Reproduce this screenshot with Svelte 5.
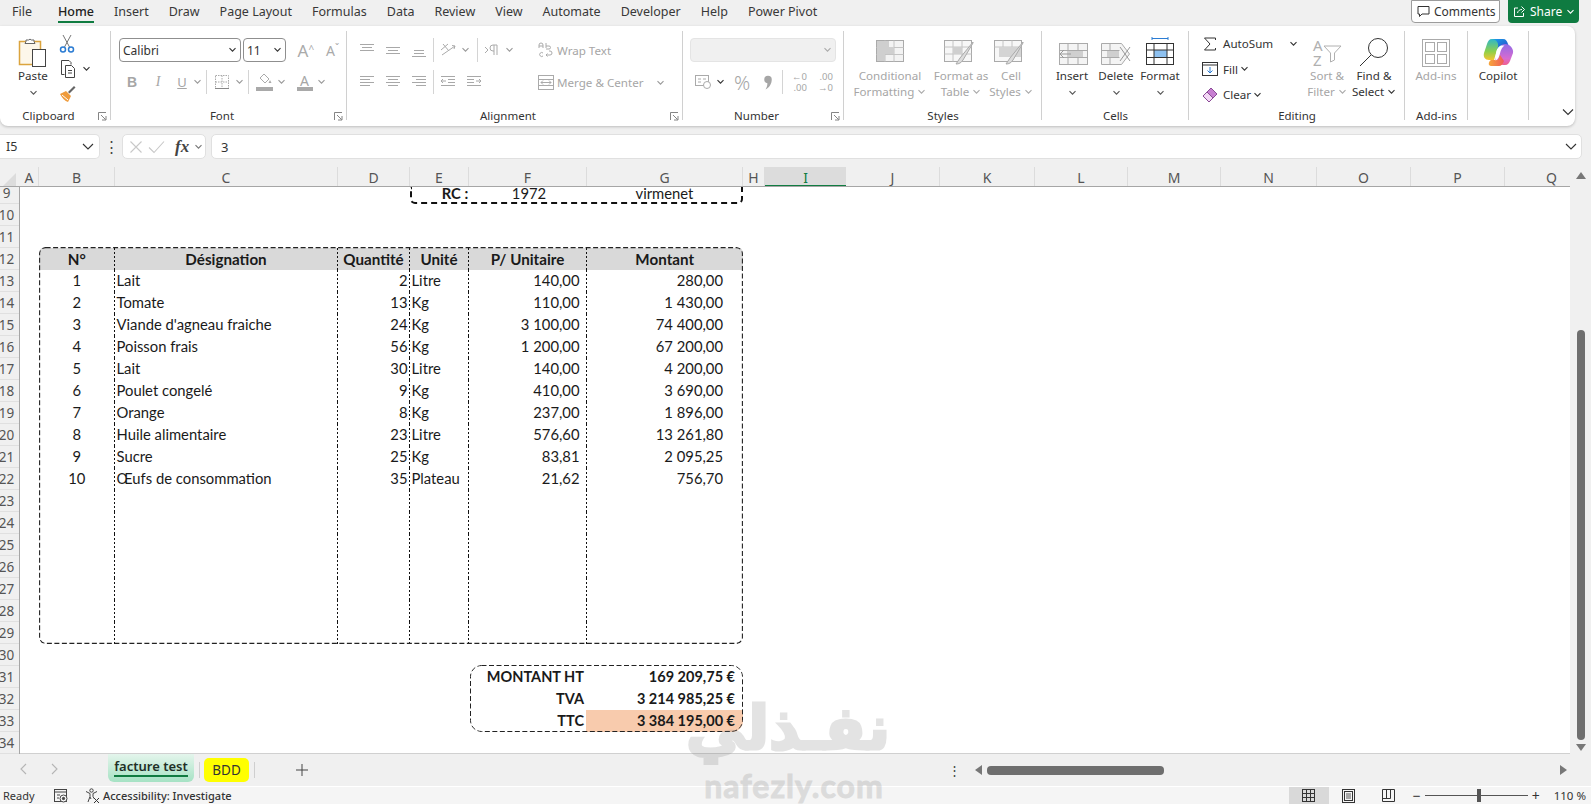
<script>
  const tabs = ['File', 'Home', 'Insert', 'Draw', 'Page Layout', 'Formulas', 'Data', 'Review', 'View', 'Automate', 'Developer', 'Help', 'Power Pivot'];
  const cols = [['A', 19], ['B', 76], ['C', 223], ['D', 72], ['E', 59], ['F', 118], ['G', 156], ['H', 22], ['I', 81], ['J', 94], ['K', 95], ['L', 93], ['M', 93], ['N', 96], ['O', 94], ['P', 94], ['Q', 94]];
  const rowNums = Array.from({ length: 26 }, (_, i) => i + 9);

  const items = [
    ['1', 'Lait', '2', 'Litre', '140,00', '280,00'],
    ['2', 'Tomate', '13', 'Kg', '110,00', '1 430,00'],
    ['3', "Viande d'agneau fraiche", '24', 'Kg', '3 100,00', '74 400,00'],
    ['4', 'Poisson frais', '56', 'Kg', '1 200,00', '67 200,00'],
    ['5', 'Lait', '30', 'Litre', '140,00', '4 200,00'],
    ['6', 'Poulet congelé', '9', 'Kg', '410,00', '3 690,00'],
    ['7', 'Orange', '8', 'Kg', '237,00', '1 896,00'],
    ['8', 'Huile alimentaire', '23', 'Litre', '576,60', '13 261,80'],
    ['9', 'Sucre', '25', 'Kg', '83,81', '2 095,25'],
    ['10', 'Œufs de consommation', '35', 'Plateau', '21,62', '756,70']
  ];
  const emptyRows = Array.from({ length: 7 }, () => ['', '', '', '', '', '']);
  const tableRows = [...items, ...emptyRows];
  const heads = ['N°', 'Désignation', 'Quantité', 'Unité', 'P/ Unitaire', 'Montant'];
  const totals = [
    ['MONTANT HT', '169 209,75 €'],
    ['TVA', '3 214 985,25 €'],
    ['TTC', '3 384 195,00 €']
  ];
</script>

{#snippet chev(color = '#555')}
  <svg class="chev" width="9" height="6" viewBox="0 0 9 6"><path d="M1.5 1.2 4.5 4.2 7.5 1.2" fill="none" stroke={color} stroke-width="1.1"/></svg>
{/snippet}

{#snippet launcher()}
  <svg class="launcher" width="9" height="9" viewBox="0 0 9 9"><path d="M.5 8V.5H8M3 3l4.5 4.5M4 8h4V4" fill="none" stroke="#777" stroke-width=".9"/></svg>
{/snippet}

{#snippet lines(kind)}
  <svg width="16" height="16" viewBox="0 0 16 16" fill="none" stroke="#a8a8a8" stroke-width="1">
    {#if kind === 'top'}<path d="M1 2.5h14M3 5.5h10M1 8.5h14"/>{/if}
    {#if kind === 'mid'}<path d="M1 5.5h14M3 8.5h10M1 11.5h14"/>{/if}
    {#if kind === 'bot'}<path d="M3 8.5h10M3 11.5h10M1 14.5h14"/>{/if}
    {#if kind === 'left'}<path d="M1 2.5h14M1 5.5h10M1 8.5h14M1 11.5h10"/>{/if}
    {#if kind === 'center'}<path d="M1 2.5h14M3 5.5h10M1 8.5h14M3 11.5h10"/>{/if}
    {#if kind === 'right'}<path d="M1 2.5h14M5 5.5h10M1 8.5h14M5 11.5h10"/>{/if}
    {#if kind === 'out'}<path d="M1 2.5h14M8 5.5h7M8 8.5h7M1 11.5h14M6 7H1M3 5 1 7l2 2"/>{/if}
    {#if kind === 'in'}<path d="M1 2.5h14M1 5.5h7M1 8.5h7M1 11.5h14M10 7h5M13 5l2 2-2 2"/>{/if}
  </svg>
{/snippet}

<div class="app">
  <header class="menubar">
    <nav class="tabs">
      {#each tabs as t}
        <span class="tab" class:active={t === 'Home'}>{t}</span>
      {/each}
    </nav>
    <div class="actions">
      <button class="comments">
        <svg width="13" height="13" viewBox="0 0 13 13"><path d="M1 1.5h11v7.5H5L2.5 11.5V9H1z" fill="none" stroke="#333" stroke-width="1"/></svg>
        Comments
      </button>
      <button class="share">
        <svg width="13" height="13" viewBox="0 0 13 13" fill="none" stroke="#fff" stroke-width="1"><path d="M5 3H1.5v8.500h9V8M4.500 8C5 5.500 7 4.500 9 4.500M8.500 1.500 11.500 4.500 8.500 7.500"/></svg>
        Share
        {@render chev('#fff')}
      </button>
    </div>
  </header>

  <section class="ribbon">
    <div class="group launch" style="width:111px">
      <div class="body clip">
        <div class="large paste">
          <svg width="30" height="32" viewBox="0 0 30 32">
            <rect x="1.500" y="5.500" width="21" height="23" fill="#fdf7ea" stroke="#dba43e" stroke-width="1.500"/>
            <path d="M8 5.500V4h2.500a2 2 0 0 1 3 0H16v1.500l1 2H7z" fill="#fff" stroke="#666"/>
            <rect x="14.500" y="13.500" width="13" height="17" fill="#fff" stroke="#444"/>
          </svg>
          <span>Paste</span>
          {@render chev()}
        </div>
        <div class="clipcol">
          <div class="cliprow">
            <svg width="16" height="20" viewBox="0 0 16 20" fill="none"><path d="M4 1l6.500 12M12 1 5.500 13" stroke="#777"/><circle cx="4" cy="15.500" r="2.500" stroke="#2b7cd3" stroke-width="1.500"/><circle cx="12" cy="15.500" r="2.500" stroke="#2b7cd3" stroke-width="1.500"/></svg>
          </div>
          <div class="cliprow">
            <svg width="18" height="18" viewBox="0 0 18 18" fill="none" stroke="#444"><path d="M5.500 14.500h-3V.5h7.500l2 2v2"/><path d="M6.500 5.500h6l3 3v9h-9z" fill="#fff"/><path d="M9 10.500h4M9 13h4"/></svg>
            <span class="after">{@render chev('#333')}</span>
          </div>
          <div class="cliprow">
            <svg width="17" height="17" viewBox="0 0 17 17"><path d="M1 9l6-3 5 5-3 6C6 16 3 13 1 9z" fill="#ef9b3c"/><path d="M3 10l6 5" stroke="#fff"/><path d="M9 7l6-6 1.500 1.500-6 6z" fill="#666"/></svg>
          </div>
        </div>
      </div>
      <div class="glabel">Clipboard {@render launcher()}</div>
    </div>

    <div class="group launch" style="width:236px">
      <div class="body rows font-group">
        <div class="row">
          <div class="select" style="width:123px">Calibri {@render chev('#333')}</div>
          <div class="select" style="width:43px">11 {@render chev('#333')}</div>
          <span class="glyph big" style="margin-left:5px">A<small>^</small></span>
          <span class="glyph med">A<small>ˇ</small></span>
        </div>
        <div class="row">
          <span class="btn gl-b">B</span>
          <span class="btn gl-i">I</span>
          <span class="btn gl-u">U</span>
          {@render chev('#999')}
          <i class="vsep"></i>
          <span class="btn">
            <svg width="16" height="16" viewBox="0 0 16 16" fill="none" stroke="#aaa" stroke-dasharray="1.500 1"><rect x="1.500" y="1.500" width="13" height="13"/><path d="M8 1.500v13M1.500 8h13"/><path d="M1 14.500h14" stroke="#888" stroke-dasharray="none"/></svg>
          </span>
          {@render chev('#999')}
          <i class="vsep"></i>
          <span class="btn">
            <svg width="17" height="19" viewBox="0 0 17 19"><path d="M8 1l5 5-4 4-5-5z" fill="none" stroke="#aaa"/><path d="M14 7l1.500 3h-3z" fill="#aaa"/><rect x="0" y="14" width="17" height="4" fill="#a9a9a9"/></svg>
          </span>
          {@render chev('#999')}
          <span class="btn colora">A<i></i></span>
          {@render chev('#999')}
        </div>
      </div>
      <div class="glabel">Font {@render launcher()}</div>
    </div>

    <div class="group launch" style="width:336px">
      <div class="body align-group">
        <div class="alignleft rows">
          <div class="row">
            <span class="btn">{@render lines('top')}</span>
            <span class="btn">{@render lines('mid')}</span>
            <span class="btn">{@render lines('bot')}</span>
            <i class="vsep"></i>
            <span class="btn">
              <svg width="17" height="16" viewBox="0 0 17 16" fill="none" stroke="#aaa"><path d="M1 8l7-6M3 2l6 7M2 13l13-9M12 3.500l3 .5-1 3"/></svg>
            </span>
            {@render chev('#999')}
            <i class="vsep" style="margin-left:7px"></i>
            <span class="btn">
              <svg width="16" height="14" viewBox="0 0 16 14" fill="none" stroke="#aaa"><path d="M1 4l3 3-3 3M10 2v10M13 2v10M13 2H9a3 3 0 0 0 0 6h1"/></svg>
            </span>
            {@render chev('#999')}
          </div>
          <div class="row">
            <span class="btn">{@render lines('left')}</span>
            <span class="btn">{@render lines('center')}</span>
            <span class="btn">{@render lines('right')}</span>
            <i class="vsep"></i>
            <span class="btn">{@render lines('out')}</span>
            <span class="btn">{@render lines('in')}</span>
          </div>
        </div>
        <div class="wrapcol rows">
          <div class="row muted">
            <svg width="16" height="16" viewBox="0 0 16 16" fill="none" stroke="#aaa"><path d="M1 6V3a2 2 0 0 1 4 0v3M1 4h4M8 1v5M8 4h3a1 1 0 0 1 0 3H8M5 11a2 2 0 1 0 0 3M8 13h4a2 2 0 0 0 0-4h-1M9.500 11.500 8 13l1.500 1.500"/></svg>
            Wrap Text
          </div>
          <div class="row muted">
            <svg width="16" height="15" viewBox="0 0 16 15" fill="none" stroke="#aaa"><rect x=".5" y=".5" width="15" height="14"/><path d="M.5 4.500h15M.5 10.500h15M3 7.500h10M5 5.500l-2 2 2 2M11 5.500l2 2-2 2"/></svg>
            Merge &amp; Center
            <span class="spaced">{@render chev('#999')}</span>
          </div>
        </div>
      </div>
      <div class="glabel">Alignment {@render launcher()}</div>
    </div>

    <div class="group launch" style="width:161px">
      <div class="body rows num-group">
        <div class="row">
          <div class="select off" style="width:146px">{@render chev('#aaa')}</div>
        </div>
        <div class="row">
          <span class="btn">
            <svg width="16" height="14" viewBox="0 0 16 14" fill="none" stroke="#aaa"><rect x=".5" y=".5" width="13" height="10"/><path d="M3 4h3M3 7h3M8 4h3"/><ellipse cx="12" cy="10" rx="3.500" ry="3.500" fill="#fff"/></svg>
          </span>
          {@render chev('#333')}
          <span class="btn pct">%</span>
          <span class="btn">
            <svg width="10" height="15" viewBox="0 0 8 12"><path d="M1 3.500a3 3 0 1 1 6 0c0 3.500-2 6.500-5 8 1-1.500 1.500-3 1.500-5A3 3 0 0 1 1 3.500z" fill="#a6a6a6"/></svg>
          </span>
          <i class="vsep"></i>
          <span class="btn dec"><b>←0</b><b>.00</b></span>
          <span class="btn dec"><b>.00</b><b>→0</b></span>
        </div>
      </div>
      <div class="glabel">Number {@render launcher()}</div>
    </div>

    <div class="group" style="width:198px">
      <div class="body bigs" style="padding-left:2px">
        <div class="large muted" style="width:88px">
          <svg width="28" height="32" viewBox="0 0 28 32">
            <g transform="translate(0,4)"><rect x=".5" y=".5" width="27" height="21" fill="#f3f3f3" stroke="#aaa"/><path d="M.5 7.500h27M.5 14.500h27M9 .5v21M18 .5v21" stroke="#c4c4c4"/><path d="M1 1h12v6h5v7H9v7H1z" fill="#cfcfcf"/></g>
          </svg>
          <span>Conditional</span>
          <span>Formatting {@render chev('#aaa')}</span>
        </div>
        <div class="large muted" style="width:54px">
          <svg class="nudge" width="30" height="32" viewBox="0 0 30 32">
            <g transform="translate(0,4)"><rect x=".5" y=".5" width="27" height="21" fill="#f7f7f7" stroke="#aaa"/><path d="M.5 7h27M.5 14h27M9 .5v21M18 .5v21" stroke="#c4c4c4"/><path d="M9 7h9v7H9z" fill="#cfcfcf"/><path d="M29 2 16 18l-4 6c3 0 5-1 7-4L29 3z" fill="#dcdcdc" stroke="#aaa"/></g>
          </svg>
          <span>Format as</span>
          <span>Table {@render chev('#aaa')}</span>
        </div>
        <div class="large muted" style="width:46px">
          <svg class="nudge" width="30" height="32" viewBox="0 0 30 32">
            <g transform="translate(0,4)"><rect x=".5" y=".5" width="27" height="21" fill="#f7f7f7" stroke="#aaa"/><path d="M.5 7h27M9 .5V7M18 .5V7" stroke="#c4c4c4"/><path d="M5 7h22v10H5z" fill="#d4d4d4"/><path d="M29 2 16 18l-4 6c3 0 5-1 7-4L29 3z" fill="#dcdcdc" stroke="#aaa"/></g>
          </svg>
          <span>Cell</span>
          <span>Styles {@render chev('#aaa')}</span>
        </div>
      </div>
      <div class="glabel">Styles</div>
    </div>

    <div class="group" style="width:147px">
      <div class="body bigs" style="padding-left:8px">
        <div class="large" style="width:44px">
          <svg width="30" height="32" viewBox="0 0 30 32" style="margin-left:4px">
            <g transform="translate(0,7)" stroke="#aaa" fill="#f4f4f4"><rect x=".5" y=".5" width="28" height="21"/><path d="M.5 7.500h28M.5 14.500h28M9 .5v21M19 .5v21" fill="none"/><path d="M10 8h14v6H10z" fill="#cfcfcf" stroke="none"/><path d="M12 11H1M5 7l-4 4 4 4" fill="none" stroke="#999"/></g>
          </svg>
          <span>Insert</span>
          {@render chev('#555')}
        </div>
        <div class="large" style="width:44px">
          <svg width="30" height="32" viewBox="0 0 30 32">
            <g transform="translate(0,7)" stroke="#aaa" fill="#f4f4f4"><path d="M.5 .5h20l8 10.500-8 10.500H.5z"/><path d="M.5 7.500h18M.5 14.500h18M9 .5v21" fill="none"/><path d="M6 8h12v6H6z" fill="#cfcfcf" stroke="none"/><path d="M19 4l10 14M29 4 19 18" fill="none" stroke="#999"/></g>
          </svg>
          <span>Delete</span>
          {@render chev('#555')}
        </div>
        <div class="large" style="width:44px">
          <svg width="30" height="32" viewBox="0 0 30 32">
            <path d="M7 2.500h16M7 1v3M23 1v3" fill="none" stroke="#2b7cd3"/>
            <g transform="translate(1,7)"><rect x=".5" y=".5" width="27" height="21" fill="#fff" stroke="#333"/><rect x="8" y="7" width="13" height="7.500" fill="#8ec1f0"/><path d="M.5 7h27M.5 14.500h27M8 .5v21M21 .5v21" stroke="#333" fill="none"/></g>
          </svg>
          <span class="fmt">Format</span>
          {@render chev('#555')}
        </div>
      </div>
      <div class="glabel">Cells</div>
    </div>

    <div class="group" style="width:216px">
      <div class="body edit-group">
        <div class="editcol">
          <div class="editrow">
            <svg class="edicon" width="14" height="14" viewBox="0 0 14 14"><path d="M12.500 3V1H1.500l5.500 6-5.500 6h11v-2" fill="none" stroke="#333"/></svg>
            AutoSum <span class="autosum-ch">{@render chev('#333')}</span>
          </div>
          <div class="editrow">
            <svg class="edicon" width="16" height="14" viewBox="0 0 16 14" fill="none"><rect x=".5" y=".5" width="15" height="13" stroke="#333"/><path d="M.5 3h15" stroke="#333"/><path d="M8 5v6M5.500 8.500 8 11l2.500-2.500" stroke="#2b7cd3"/></svg>
            Fill {@render chev('#333')}
          </div>
          <div class="editrow">
            <svg class="edicon" width="16" height="16" viewBox="0 0 16 16"><path d="M1 9l8-8 6 6-8 8z" fill="#c77fd1" stroke="#8a4a96"/><path d="M5 5l6 6-4 4-6-6z" fill="#f3d9f5" stroke="#8a4a96"/></svg>
            Clear {@render chev('#333')}
          </div>
        </div>
        <div class="large muted" style="width:46px">
          <svg width="30" height="32" viewBox="0 0 30 32" fill="none" stroke="#b0b0b0">
            <text x="1" y="15" font-size="15" font-family="Noto Sans, sans-serif" fill="#b0b0b0" stroke="none">A</text>
            <text x="1" y="30" font-size="15" font-family="Noto Sans, sans-serif" fill="#b0b0b0" stroke="none">Z</text>
            <path d="M12 10h17l-6.500 7v7l-4 2v-9z"/>
          </svg>
          <span>Sort &amp;</span>
          <span>Filter {@render chev('#aaa')}</span>
        </div>
        <div class="large" style="width:48px">
          <svg width="30" height="32" viewBox="0 0 30 32" fill="none" stroke="#333"><circle cx="19" cy="12" r="9.500"/><path d="M12 19 1 30" stroke-width="1"/></svg>
          <span>Find &amp;</span>
          <span>Select {@render chev('#333')}</span>
        </div>
      </div>
      <div class="glabel">Editing</div>
    </div>

    <div class="group" style="width:63px">
      <div class="body bigs">
        <div class="large muted" style="width:62px">
          <svg width="28" height="32" viewBox="0 0 28 32" fill="none" stroke="#aaa"><rect x=".5" y="3.500" width="27" height="27"/><rect x="3.500" y="6.500" width="9" height="9"/><rect x="15.500" y="6.500" width="9" height="9"/><rect x="3.500" y="18.500" width="9" height="9"/><rect x="15.500" y="18.500" width="9" height="9"/></svg>
          <span>Add-ins</span>
        </div>
      </div>
      <div class="glabel">Add-ins</div>
    </div>

    <div class="group" style="width:61px">
      <div class="body bigs">
        <div class="large" style="width:60px">
          <svg width="31" height="32" viewBox="0 0 31 32">
            <defs>
              <linearGradient id="cpA" x1="0" y1="0" x2="1" y2="1"><stop offset="0" stop-color="#1aa3e8"/><stop offset="1" stop-color="#2a3fc8"/></linearGradient>
              <linearGradient id="cpB" x1="0" y1="0" x2="0" y2="1"><stop offset="0" stop-color="#2fb8c8"/><stop offset=".6" stop-color="#8fd04a"/><stop offset="1" stop-color="#f4c530"/></linearGradient>
              <linearGradient id="cpC" x1="0" y1="0" x2="0" y2="1"><stop offset="0" stop-color="#8f6be6"/><stop offset=".7" stop-color="#d86bd0"/><stop offset="1" stop-color="#f15f8c"/></linearGradient>
              <linearGradient id="cpD" x1="0" y1="0" x2="1" y2="0"><stop offset="0" stop-color="#f7a63a"/><stop offset="1" stop-color="#ef5a5a"/></linearGradient>
            </defs>
            <path d="M9 3h11c3 0 4 2 5 5l2 6-8-2-5 1z" fill="url(#cpA)"/>
            <path d="M9 3C6 3 5 5 4 8L1 17c-1 4 1 7 5 7h5l3-10 1-3C16 7 13 3 9 3z" fill="url(#cpB)"/>
            <path d="M22 8c-4 0-5 3-6 6l-4 10c2 3 5 5 10 5 3 0 4-2 5-4l3-8c1-4-3-9-8-9z" fill="url(#cpC)"/>
            <path d="M8 24h7l2-5 4 6c-1 3-3 5-5 5h-8c-3 0-3-4 0-6z" fill="url(#cpD)"/>
            <path d="M12.500 24.500c3-1 4-5 5-9 .6-2 2-4.500 4-6h-2.500c-3 0-4.500 2.500-5.500 5.500-1 3-1 7-1 9.500z" fill="#fff"/>
          </svg>
          <span>Copilot</span>
        </div>
      </div>
    </div>

    <div class="collapse">
      <svg width="14" height="8" viewBox="0 0 14 8"><path d="M2 1.500 7 6.500 12 1.500" fill="none" stroke="#333" stroke-width="1.100"/></svg>
    </div>
  </section>

  <section class="formula">
    <div class="namebox">I5 <span class="nb-ch"><svg width="12" height="7" viewBox="0 0 12 7"><path d="M1 1l5 5 5-5" fill="none" stroke="#333" stroke-width="1.100"/></svg></span></div>
    <div class="dots">⋮</div>
    <div class="fxbox">
      <svg width="14" height="14" viewBox="0 0 14 14"><path d="M1.500 1.500l11 11M12.500 1.500l-11 11" stroke="#c8c8c8" stroke-width="1.100"/></svg>
      <svg width="17" height="14" viewBox="0 0 17 14"><path d="M1 7.500 6 12.500 16 1.500" fill="none" stroke="#c8c8c8" stroke-width="1.100"/></svg>
      <span class="fx">fx</span>
      {@render chev('#777')}
    </div>
    <div class="fxinput">
      3
      <svg width="12" height="7" viewBox="0 0 12 7"><path d="M1 1l5 5 5-5" fill="none" stroke="#333" stroke-width="1.100"/></svg>
    </div>
  </section>

  <section class="workarea">
    <div class="gridpane">
      <div class="colheads">
        <div class="corner"><svg width="14" height="14" viewBox="0 0 14 14"><path d="M13 1v13H0z" fill="#dcdcdc"/></svg></div>
        {#each cols as [c, w]}
          <div class="colhead" class:sel={c === 'I'} style="width:{w}px">{c}</div>
        {/each}
      </div>
      <div class="gridbody">
        <div class="rowheads">
          {#each rowNums as n}
            <div class="rowhead" class:first={n === 9}>{n}</div>
          {/each}
        </div>
        <div class="sheet">
          <div class="rcbox">
            <span class="rc-e">RC :</span>
            <span class="rc-f">1972</span>
            <span class="rc-g">virmenet</span>
          </div>

          <div class="table">
            <div class="trow head">
              {#each heads as h}
                <div class="cell">{h}</div>
              {/each}
            </div>
            {#each tableRows as r}
              <div class="trow">
                <div class="cell center">{r[0]}</div>
                <div class="cell des">{r[1]}</div>
                <div class="cell qty">{r[2]}</div>
                <div class="cell unit">{r[3]}</div>
                <div class="cell pu">{r[4]}</div>
                <div class="cell amt">{r[5]}</div>
              </div>
            {/each}
            <svg class="outline" width="704" height="397" viewBox="0 0 704 397"><rect x=".6" y=".6" width="702.800" height="395.800" rx="6" fill="none" stroke="#222" stroke-width="1.100" stroke-dasharray="5 2.500"/></svg>
          </div>

          <div class="totals">
            {#each totals as [k, v], i}
              <div class="t-label">{k}</div>
              <div class="t-value" class:ttc={i === 2}>{v}</div>
            {/each}
            <svg class="outline" width="273" height="67" viewBox="0 0 273 67"><rect x=".5" y=".5" width="272" height="66" rx="11" fill="none" stroke="#222" stroke-width="1" stroke-dasharray="5 2.500"/></svg>
          </div>
        </div>
      </div>
    </div>
    <div class="vscroll">
      <svg width="10" height="7" viewBox="0 0 10 7"><path d="M5 0l5 7H0z" fill="#777"/></svg>
      <div class="vthumb"></div>
      <svg width="10" height="7" viewBox="0 0 10 7"><path d="M5 7 0 0h10z" fill="#777"/></svg>
    </div>
  </section>

  <section class="sheetbar">
    <div class="navarrows">
      <svg width="8" height="12" viewBox="0 0 8 12"><path d="M7 1 2 6l5 5" fill="none" stroke="#b5b5b5" stroke-width="1.100"/></svg>
      <svg width="8" height="12" viewBox="0 0 8 12"><path d="M1 1l5 5-5 5" fill="none" stroke="#b5b5b5" stroke-width="1.100"/></svg>
    </div>
    <div class="sheettab active"><span>facture test</span></div>
    <i class="tabsep"></i>
    <div class="sheettab bdd">BDD</div>
    <i class="tabsep"></i>
    <svg class="plus" width="12" height="12" viewBox="0 0 12 12"><path d="M6 0v12M0 6h12" stroke="#444" stroke-width="1"/></svg>
    <div class="hzone">
      <span class="dots small">⋮</span>
      <svg class="harrow" width="7" height="10" viewBox="0 0 7 10"><path d="M0 5l7-5v10z" fill="#777"/></svg>
      <div class="htrack"><div class="hthumb"></div></div>
      <svg width="7" height="10" viewBox="0 0 7 10"><path d="M7 5 0 0v10z" fill="#777"/></svg>
    </div>
  </section>

  <footer class="status">
    <span class="ready">Ready</span>
    <svg class="macro" width="14" height="14" viewBox="0 0 14 14" fill="none" stroke="#444"><rect x=".5" y=".5" width="12" height="12"/><path d="M.5 3h12M3 6h3M3 9h2"/><circle cx="9.500" cy="9.500" r="3.500" fill="#fff"/><circle cx="9.500" cy="9.500" r="1.200" fill="#444"/></svg>
    <svg class="acc" width="15" height="15" viewBox="0 0 15 15" fill="none" stroke="#444"><circle cx="6.500" cy="2.500" r="1.700"/><path d="M1 3.500l4 2v3L3 14M12 3.500l-4 2v3l1 2M5 9l1 2"/><path d="M9 10l5 5M14 10l-5 5" stroke="#333"/></svg>
    <span class="acctext">Accessibility: Investigate</span>
    <div class="status-right">
      <span class="view on"><svg width="13" height="13" viewBox="0 0 13 13" fill="none" stroke="#333"><rect x=".5" y=".5" width="12" height="12"/><path d="M.5 4.500h12M.5 8.500h12M4.500 .5v12M8.500 .5v12"/></svg></span>
      <span class="view"><svg width="13" height="14" viewBox="0 0 13 14" fill="none" stroke="#333"><rect x=".5" y=".5" width="12" height="13"/><rect x="2.500" y="2.500" width="8" height="9"/><path d="M4 5h5M4 7h5M4 9h5" stroke-width=".8"/></svg></span>
      <span class="view"><svg width="13" height="13" viewBox="0 0 13 13" fill="none" stroke="#333"><path d="M.5 .5h12v12H.5zM.5 9.500h8M4.500 .5v9M8.500 .5v9"/></svg></span>
      <div class="zoomer">
        <span class="zm">−</span>
        <div class="ztrack"><div class="zthumb"></div></div>
        <span class="zm">+</span>
      </div>
      <span class="pct110">110 %</span>
    </div>
  </footer>

  <div class="watermark" aria-hidden="true">
    <div class="wm-ar" dir="rtl">نفـذلي</div>
    <div class="wm-en">nafezly.com</div>
  </div>
</div>

<style>
  :global(body) {
    margin: 0;
    overflow: hidden;
    background: #f0f0f0;
  }

  .app {
    position: relative;
    width: 1591px;
    height: 804px;
    display: flex;
    flex-direction: column;
    overflow: hidden;
    background: #f0f0f0;
    font-family: "Noto Sans", "Open Sans", sans-serif;
    font-size: 11.600px;
    color: #333;
  }

  svg {
    flex: none;
    display: block;
  }

  /* menu row */
  .menubar {
    height: 26px;
    display: flex;
    justify-content: space-between;
    padding-right: 12px;
    box-sizing: border-box;
  }
  .tabs {
    display: flex;
    gap: 20px;
    padding-left: 12px;
  }
  .tab {
    height: 23px;
    line-height: 23px;
    font-size: 12.500px;
    white-space: nowrap;
    color: #383838;
  }
  .tab.active {
    color: #222;
    font-weight: 500;
    margin-left: 6px;
    box-shadow: inset 0 -2px 0 #107c41;
  }
  .actions {
    display: flex;
    gap: 8px;
    height: 23px;
  }
  .comments,
  .share {
    display: flex;
    align-items: center;
    gap: 4px;
    font: inherit;
    font-size: 12px;
    border-radius: 0 0 4px 4px;
    padding: 0 5px;
    box-sizing: border-box;
  }
  .comments {
    width: 89px;
    background: #fff;
    border: 1px solid #9c9c9c;
    color: #333;
  }
  .share {
    width: 71px;
    background: #0f7b41;
    border: 0;
    color: #fff;
  }

  /* ribbon */
  .ribbon {
    height: 100px;
    width: 1575px;
    box-sizing: border-box;
    padding-top: 5px;
    display: flex;
    background: #fff;
    border-radius: 0 8px 8px 8px;
    box-shadow: 0 1px 3px rgba(0, 0, 0, 0.22);
    position: relative;
  }
  .group {
    height: 89px;
    box-sizing: border-box;
    border-right: 1px solid #d0d0d0;
    display: flex;
    flex-direction: column;
    position: relative;
    flex: none;
  }
  .body {
    height: 77px;
    flex: none;
    display: flex;
  }
  .glabel {
    height: 12px;
    line-height: 16px;
    text-align: center;
    font-size: 11.500px;
    color: #333;
    padding-left: 1px;
  }
  .launch .glabel {
    padding-right: 14px;
  }
  .launcher {
    position: absolute;
    right: 3px;
    bottom: -1px;
  }
  .chev {
    display: inline-block;
    vertical-align: 1px;
  }

  .large {
    display: flex;
    flex-direction: column;
    align-items: center;
    padding-top: 5px;
    box-sizing: border-box;
    line-height: 16px;
    white-space: nowrap;
    color: #333;
    flex: none;
  }
  .large > svg:first-child {
    height: 32px;
  }
  .large > svg.nudge {
    margin-right: 5px;
  }
  .large > .chev {
    margin-top: 6px;
  }
  .muted,
  .muted span {
    color: #a6a6a6;
  }
  .bigs {
    align-items: flex-start;
  }

  .clip .paste {
    width: 50px;
    margin-left: 8px;
  }
  .clipcol {
    width: 48px;
    display: flex;
    flex-direction: column;
  }
  .cliprow {
    height: 25px;
    display: flex;
    align-items: center;
    padding-left: 1px;
  }
  .after {
    margin-left: 5px;
  }

  .rows {
    flex-direction: column;
    padding-top: 7px;
    gap: 8px;
    box-sizing: border-box;
  }
  .row {
    height: 24px;
    display: flex;
    align-items: center;
    white-space: nowrap;
  }
  .font-group {
    padding-left: 8px;
  }
  .num-group {
    padding-left: 7px;
  }
  .select {
    height: 24px;
    box-sizing: border-box;
    border: 1px solid #8f8f8f;
    border-radius: 4px;
    display: flex;
    align-items: center;
    justify-content: space-between;
    padding: 0 3px;
    margin-right: 2px;
    font-size: 12px;
    color: #333;
    background: #fff;
  }
  .select.off {
    background: #f0f0f0;
    border-color: #e4e4e4;
    justify-content: flex-end;
  }
  .btn {
    width: 26px;
    height: 24px;
    display: flex;
    align-items: center;
    justify-content: center;
    flex: none;
    color: #a6a6a6;
  }
  .vsep {
    display: block;
    width: 1px;
    height: 24px;
    background: #d4d4d4;
    margin: 0 1px;
    flex: none;
  }
  .font-group .vsep {
    margin: 0 2px 0 4px;
  }
  .glyph {
    width: 27px;
    color: #aaa;
    font-size: 16px;
    text-align: center;
  }
  .glyph.big {
    font-size: 17px;
  }
  .glyph.med {
    font-size: 14px;
  }
  .glyph small {
    font-size: 10px;
    vertical-align: 4px;
  }
  .gl-b {
    font-weight: 700;
    font-size: 14px;
    font-family: "Liberation Sans", sans-serif;
  }
  .gl-i {
    font-style: italic;
    font-size: 14px;
    font-family: "Liberation Serif", serif;
  }
  .gl-u {
    text-decoration: underline;
    font-size: 13px;
    width: 22px;
  }
  .colora {
    flex-direction: column;
    font-size: 14px;
    line-height: 13px;
    width: 25px;
    margin-left: 6px;
  }
  .colora i {
    display: block;
    width: 16px;
    height: 4px;
    background: #a9a9a9;
  }
  .pct {
    font-size: 20px;
    font-weight: 300;
    margin-left: 4px;
  }
  .dec {
    flex-direction: column;
    line-height: 11px;
    font-size: 9.500px;
    align-items: flex-end;
    padding-right: 3px;
    box-sizing: border-box;
  }
  .dec b {
    font-weight: 400;
  }

  .align-group {
    padding-left: 7px;
  }
  .alignleft {
    width: 184px;
    display: flex;
    flex: none;
  }
  .wrapcol {
    display: flex;
    flex: none;
  }
  .wrapcol .row {
    gap: 3px;
  }
  .spaced {
    margin-left: 10px;
  }

  .edit-group {
    padding-left: 10px;
  }
  .editcol {
    width: 105px;
    flex: none;
  }
  .editrow {
    height: 25.500px;
    display: flex;
    align-items: center;
    white-space: nowrap;
    gap: 2px;
    color: #333;
  }
  .edicon {
    width: 22px;
  }
  .autosum-ch {
    margin-left: 14px;
  }
  .collapse {
    position: absolute;
    right: 0;
    bottom: 10px;
    width: 14px;
  }

  /* formula bar */
  .formula {
    height: 25px;
    margin-top: 8px;
    display: flex;
    align-items: stretch;
    padding-right: 9px;
    flex: none;
  }
  .namebox,
  .fxbox,
  .fxinput {
    background: #fff;
    border: 1px solid #e0e0e0;
    border-radius: 5px;
    box-sizing: border-box;
    display: flex;
    align-items: center;
  }
  .namebox {
    width: 100px;
    padding-left: 6px;
    border-radius: 0 5px 5px 0;
    border-left: 0;
    justify-content: space-between;
    font-size: 12.500px;
  }
  .nb-ch {
    padding-right: 5px;
  }
  .dots {
    width: 22px;
    text-align: center;
    font-size: 15px;
    line-height: 25px;
    color: #444;
  }
  .fxbox {
    width: 84px;
    padding-left: 6px;
    gap: 5px;
  }
  .fx {
    font-family: "Liberation Serif", serif;
    font-style: italic;
    font-weight: 700;
    font-size: 17px;
    color: #444;
    margin-left: 5px;
  }
  .fxinput {
    margin-left: 5px;
    flex: 1;
    padding: 0 4px 0 9px;
    justify-content: space-between;
    font-size: 13px;
  }

  /* grid */
  .workarea {
    flex: 1;
    min-height: 0;
    margin-top: 8px;
    display: flex;
  }
  .gridpane {
    width: 1570px;
    display: flex;
    flex-direction: column;
    flex: none;
  }
  .colheads {
    height: 20px;
    display: flex;
    flex: none;
    box-sizing: border-box;
    border-bottom: 1px solid #a6a6a6;
    color: #555;
    font-size: 14px;
    overflow: hidden;
  }
  .corner {
    width: 20px;
    flex: none;
    display: flex;
    align-items: flex-end;
    justify-content: center;
  }
  .colhead {
    flex: none;
    box-sizing: border-box;
    border-right: 1px solid #dcdcdc;
    text-align: center;
    line-height: 22px;
  }
  .colhead.sel {
    background: #dcdcdc;
    color: #107c41;
    border-right: 0;
    height: 20px;
    border-bottom: 2px solid #107c41;
  }
  .gridbody {
    flex: 1;
    min-height: 0;
    display: flex;
  }
  .rowheads {
    width: 20px;
    flex: none;
    overflow: hidden;
    font-size: 13.500px;
    color: #555;
    border-right: 1px solid #a6a6a6;
    box-sizing: border-box;
    text-align: center;
  }
  .rowhead {
    height: 22px;
    line-height: 22px;
    box-sizing: border-box;
    border-bottom: 1px solid #e0e0e0;
    text-indent: -6px;
  }
  .rowhead.first {
    height: 17px;
    line-height: 12px;
  }
  .sheet {
    flex: 1;
    background: #fff;
    border-bottom: 1px solid #d0d0d0;
    font-family: "Lato", "Liberation Sans", sans-serif;
    font-size: 14.800px;
    color: #1a1a1a;
    overflow: hidden;
  }
  .rcbox {
    width: 333px;
    height: 17px;
    margin-left: 390px;
    box-sizing: border-box;
    border: 2px dashed #111;
    border-top: 0;
    border-radius: 0 0 5px 5px;
    display: grid;
    grid-template-columns: 58px 118px 1fr;
    text-align: center;
    line-height: 12px;
  }
  .rc-e {
    font-weight: 700;
    padding-left: 28px;
    white-space: nowrap;
  }
  .table {
    position: relative;
    width: 704px;
    height: 397px;
    margin: 43px 0 0 19px;
    box-sizing: border-box;
    padding-top: 1px;
    border-radius: 6px;
    overflow: hidden;
  }
  .outline {
    position: absolute;
    left: 0;
    top: 0;
  }
  .trow {
    height: 22px;
    display: grid;
    grid-template-columns: 75.500px 223px 72px 59px 118px 1fr;
    line-height: 21px;
  }
  .trow.head {
    background: #d9d9d9;
    font-weight: 700;
    font-size: 15.200px;
    text-align: center;
    line-height: 22px;
  }
  .cell {
    box-sizing: border-box;
    background: repeating-linear-gradient(#111 0 2px, transparent 2px 4px) right / 1px 100% no-repeat;
    white-space: nowrap;
  }
  .cell:last-child {
    background: none;
  }
  .center {
    text-align: center;
  }
  .des {
    padding-left: 2px;
  }
  .qty {
    text-align: right;
    padding-right: 2px;
  }
  .unit {
    padding-left: 2px;
  }
  .pu {
    text-align: right;
    padding-right: 7px;
  }
  .amt {
    text-align: right;
    padding-right: 20px;
  }
  .totals {
    position: relative;
    width: 273px;
    height: 67px;
    margin: 21px 0 0 450px;
    box-sizing: border-box;
    padding-top: 1px;
    border-radius: 11px;
    overflow: hidden;
    display: grid;
    grid-template-columns: 116px 1fr;
    grid-auto-rows: 22px;
    font-weight: 700;
    font-size: 14.500px;
    line-height: 21px;
  }
  .t-label {
    text-align: right;
    padding-right: 2px;
  }
  .t-value {
    text-align: right;
    padding-right: 8px;
  }
  .t-value.ttc {
    background: #f8cbad;
  }

  .vscroll {
    flex: 1;
    display: flex;
    flex-direction: column;
    align-items: center;
    padding-top: 5px;
    padding-bottom: 3px;
    box-sizing: border-box;
  }
  .vthumb {
    width: 8px;
    height: 410px;
    margin-top: 151px;
    margin-bottom: auto;
    background: #6e6e6e;
    border-radius: 4px;
  }

  /* sheet tabs */
  .sheetbar {
    height: 32px;
    flex: none;
    display: flex;
    align-items: flex-start;
  }
  .navarrows {
    width: 108px;
    display: flex;
    gap: 24px;
    padding: 9px 0 0 19px;
    box-sizing: border-box;
    flex: none;
  }
  .sheettab {
    height: 28px;
    box-sizing: border-box;
    flex: none;
    font-size: 13px;
    text-align: center;
  }
  .sheettab.active {
    width: 86px;
    padding-top: 3px;
    background: linear-gradient(#e4f5ec, #a6e2c4);
    border-radius: 0 0 6px 6px;
    font-weight: 600;
    color: #1f2f26;
    line-height: 18px;
  }
  .sheettab.active span {
    display: inline-block;
    height: 20px;
    box-shadow: inset 0 -2px 0 #107c41;
    white-space: nowrap;
  }
  .sheettab.bdd {
    width: 45px;
    height: 24px;
    margin-top: 4px;
    background: #ffff00;
    border-radius: 5px;
    line-height: 25px;
    font-size: 13.500px;
  }
  .tabsep {
    display: block;
    width: 1px;
    height: 16px;
    margin: 8px 4px 0 5px;
    background: #cfcfcf;
    flex: none;
  }
  .plus {
    margin: 10px 0 0 37px;
  }
  .hzone {
    margin-left: auto;
    width: 661px;
    height: 32px;
    display: flex;
    align-items: center;
    padding: 0 24px 0 18px;
    box-sizing: border-box;
    align-self: stretch;
  }
  .dots.small {
    width: 12px;
    font-size: 13px;
    line-height: 32px;
  }
  .harrow {
    margin-left: 15px;
  }
  .htrack {
    flex: 1;
    margin-left: 5px;
  }
  .hthumb {
    width: 177px;
    height: 9px;
    background: #6e6e6e;
    border-radius: 4px;
  }

  /* status bar */
  .status {
    height: 18px;
    flex: none;
    display: flex;
    align-items: center;
    background: #f5f5f5;
    border-top: 1px solid #fff;
    box-sizing: border-box;
    font-size: 11px;
    color: #333;
  }
  .ready {
    margin-left: 3px;
    width: 51px;
  }
  .acc {
    margin-left: 17px;
  }
  .acctext {
    margin-left: 3px;
    font-weight: 500;
  }
  .status-right {
    margin-left: auto;
    display: flex;
    align-items: center;
    height: 100%;
  }
  .view {
    width: 40px;
    height: 100%;
    display: flex;
    align-items: center;
    justify-content: center;
  }
  .view.on {
    background: #d9d9d9;
  }
  .zoomer {
    display: flex;
    align-items: center;
    gap: 4px;
    margin-left: 4px;
  }
  .zm {
    font-size: 14px;
    line-height: 14px;
  }
  .ztrack {
    width: 103px;
    height: 1px;
    background: #555;
    position: relative;
  }
  .zthumb {
    position: absolute;
    left: 52px;
    top: -6px;
    width: 4px;
    height: 13px;
    background: #555;
  }
  .pct110 {
    margin: 0 5px 0 14px;
    font-size: 11.500px;
  }

  .watermark {
    position: absolute;
    left: 698px;
    top: 693px;
    width: 192px;
    text-align: center;
    pointer-events: none;
    color: #777;
    opacity: 0.2;
  }
  .wm-ar {
    font-family: "DejaVu Sans", sans-serif;
    font-weight: 700;
    font-size: 60px;
    line-height: 70px;
    -webkit-text-stroke: 3px #777;
  }
  .wm-en {
    font-family: "Lato", sans-serif;
    font-size: 32px;
    line-height: 30px;
    font-weight: 700;
    letter-spacing: 1px;
    margin-top: 8px;
    -webkit-text-stroke: 1px #777;
  }
</style>
